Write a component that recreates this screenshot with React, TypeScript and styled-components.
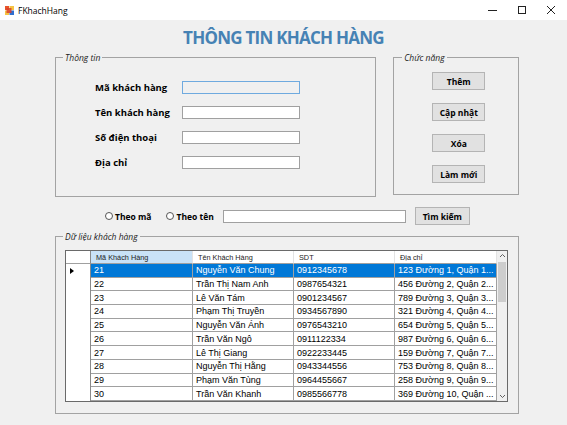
import React from "react";
import styled, { createGlobalStyle } from "styled-components";

const GlobalStyle = createGlobalStyle`
  html, body { margin: 0; padding: 0; }
  body {
    width: 567px;
    height: 425px;
    overflow: hidden;
    background: #f0f0f0;
    font-family: "Open Sans", "DejaVu Sans", sans-serif;
  }
  * { box-sizing: border-box; }
`;

const Window = styled.div`
  width: 567px;
  height: 425px;
  display: flex;
  flex-direction: column;
  background: #f0f0f0;
  overflow: hidden;
`;

const TitleBar = styled.div`
  height: 20px;
  flex-shrink: 0;
  background: #ffffff;
  display: flex;
  align-items: center;
`;

const AppIcon = styled.svg`
  margin-left: 5px;
  width: 9px;
  height: 9px;
  flex-shrink: 0;
`;

const WindowTitle = styled.span`
  margin-left: 4px;
  font-family: "Open Sans", sans-serif;
  font-size: 8.5px;
  color: #000;
`;

const Controls = styled.div`
  margin-left: auto;
  margin-right: 2px;
  display: flex;
  height: 100%;
`;

const ControlButton = styled.div`
  width: 29px;
  height: 100%;
  display: flex;
  align-items: center;
  justify-content: center;
`;

const Title = styled.h1`
  margin: 8px 0 0;
  text-align: center;
  font-family: "Open Sans", sans-serif;
  font-weight: 700;
  font-size: 17px;
  line-height: 20px;
  color: #4682b4;
  letter-spacing: -0.75px;
`;

const Content = styled.div`
  display: flex;
  flex-direction: column;
  padding: 0 48px 0 55px;
`;

const TopRow = styled.div`
  margin-top: 4px;
  display: flex;
  align-items: flex-start;
  gap: 17px;
`;

const Group = styled.fieldset<{ $w: number; $h: number }>`
  margin: 0;
  padding: 0;
  min-width: 0;
  width: ${(p) => p.$w}px;
  height: ${(p) => p.$h}px;
  border: 1px solid #a3a3a3;
`;

const Legend = styled.legend<{ $ml?: number }>`
  margin-left: ${(p) => p.$ml ?? 7}px;
  padding: 0 2px;
  font-family: "Open Sans", sans-serif;
  font-style: italic;
  font-size: 8.5px;
  line-height: 11px;
  color: #1a1a1a;
`;

const FormGrid = styled.div`
  display: grid;
  grid-template-columns: 87px 118px;
  row-gap: 12px;
  align-items: center;
  padding: 18px 0 0 39px;
`;

const FieldLabel = styled.label`
  font-family: "Open Sans", sans-serif;
  font-weight: 700;
  font-size: 9.5px;
  line-height: 13px;
  color: #000;
  white-space: nowrap;
`;

const TextBox = styled.div<{ $readOnly?: boolean; $w?: number }>`
  width: ${(p) => p.$w ?? 118}px;
  height: 13px;
  background: ${(p) => (p.$readOnly ? "#f0f0f0" : "#ffffff")};
  border: 1px solid ${(p) => (p.$readOnly ? "#6faadf" : "#a0a0a0")};
`;

const ButtonColumn = styled.div`
  display: flex;
  flex-direction: column;
  gap: 13px;
  padding: 9px 0 0 38px;
`;

const Button = styled.div<{ $w?: number }>`
  width: ${(p) => p.$w ?? 53}px;
  height: 18px;
  display: flex;
  align-items: center;
  justify-content: center;
  background: #e1e1e1;
  border: 1px solid #b4b4b4;
  font-family: "Open Sans", sans-serif;
  font-weight: 700;
  font-size: 8.5px;
  color: #000;
  white-space: nowrap;
`;

const SearchRow = styled.div`
  margin-top: 10px;
  height: 18px;
  display: flex;
  align-items: center;
  padding-left: 50px;
`;

const Radio = styled.label<{ $mr: number }>`
  display: flex;
  align-items: center;
  margin-right: ${(p) => p.$mr}px;
  font-family: "Open Sans", sans-serif;
  font-weight: 700;
  font-size: 8.5px;
  color: #000;
  white-space: nowrap;
`;

const RadioCircle = styled.span`
  width: 8px;
  height: 8px;
  border-radius: 50%;
  border: 1px solid #555;
  background: #fff;
  margin-right: 2px;
  flex-shrink: 0;
`;

const SearchButton = styled(Button)`
  margin-left: 9px;
`;

const DataGroup = styled(Group)`
  margin-top: 6px;
`;

const GridFrame = styled.div`
  margin: 8px 0 0 9px;
  width: 443px;
  height: 152px;
  border: 1px solid #6a6a6a;
  background: #ffffff;
  display: flex;
`;

const Table = styled.div`
  width: 431px;
  height: 150px;
  display: grid;
  grid-template-columns: 25px 102px 101px 101px 102px;
  grid-template-rows: 13px repeat(10, 1fr);
`;

const HeaderCell = styled.div<{ $active?: boolean }>`
  display: flex;
  align-items: center;
  padding-left: 5px;
  background: ${(p) => (p.$active ? "#c9e2f7" : "#ffffff")};
  border-right: 1px solid #e3e3e3;
  border-bottom: 1px solid #a0a0a0;
  font-family: "Liberation Sans", Arial, sans-serif;
  font-size: 7.3px;
  color: #222;
  white-space: nowrap;
  overflow: hidden;
`;

const CornerCell = styled(HeaderCell)`
  border-right: 1px solid #8a8a8a;
`;

const RowHeader = styled.div`
  display: flex;
  align-items: center;
  padding-left: 4px;
  background: #ffffff;
  border-right: 1px solid #8a8a8a;
`;

const Cell = styled.div<{ $selected?: boolean }>`
  display: flex;
  align-items: center;
  padding-left: 3px;
  background: ${(p) => (p.$selected ? "#0078d7" : "#ffffff")};
  color: ${(p) => (p.$selected ? "#ffffff" : "#000000")};
  border-right: 1px solid #a0a0a0;
  border-bottom: 1px solid #a0a0a0;
  font-family: "Liberation Sans", Arial, sans-serif;
  font-size: 9px;
  white-space: nowrap;
  overflow: hidden;
`;

const Scrollbar = styled.div`
  width: 10px;
  height: 150px;
  background: #f0f0f0;
  display: flex;
  flex-direction: column;
  align-items: center;
`;

const ScrollArrow = styled.svg`
  width: 7px;
  height: 10px;
  flex-shrink: 0;
`;

const Thumb = styled.div`
  margin-top: 1px;
  width: 8px;
  height: 40px;
  background: #cdcdcd;
`;

const ScrollSpacer = styled.div`
  flex: 1;
`;

type Customer = { id: string; name: string; phone: string; address: string };

const customers: Customer[] = [
  { id: "21", name: "Nguyễn Văn Chung", phone: "0912345678", address: "123 Đường 1, Quận 1..." },
  { id: "22", name: "Trần Thị Nam Anh", phone: "0987654321", address: "456 Đường 2, Quận 2..." },
  { id: "23", name: "Lê Văn Tám", phone: "0901234567", address: "789 Đường 3, Quận 3..." },
  { id: "24", name: "Phạm Thị Truyền", phone: "0934567890", address: "321 Đường 4, Quận 4..." },
  { id: "25", name: "Nguyễn Văn Ánh", phone: "0976543210", address: "654 Đường 5, Quận 5..." },
  { id: "26", name: "Trần Văn Ngô", phone: "0911122334", address: "987 Đường 6, Quận 6..." },
  { id: "27", name: "Lê Thị Giang", phone: "0922233445", address: "159 Đường 7, Quận 7..." },
  { id: "28", name: "Nguyễn Thị Hằng", phone: "0943344556", address: "753 Đường 8, Quận 8..." },
  { id: "29", name: "Phạm Văn Tùng", phone: "0964455667", address: "258 Đường 9, Quận 9..." },
  { id: "30", name: "Trần Văn Khanh", phone: "0985566778", address: "369 Đường 10, Quận ..." },
];

const fields = [
  { label: "Mã khách hàng", readOnly: true },
  { label: "Tên khách hàng" },
  { label: "Số điện thoại" },
  { label: "Địa chỉ" },
];

const actions = ["Thêm", "Cập nhật", "Xóa", "Làm mới"];

export default function App() {
  return (
    <>
      <GlobalStyle />
      <Window>
        <TitleBar>
          <AppIcon viewBox="0 0 9 9">
            <rect x="0" y="0" width="4" height="4" fill="#e8542b" />
            <rect x="4.5" y="0" width="4.5" height="4" fill="#f6c343" />
            <rect x="0" y="4.5" width="4" height="4.5" fill="#f6c343" />
            <rect x="4.5" y="4.5" width="4.5" height="4.5" fill="#2f6fd0" />
            <rect x="1.5" y="2" width="5" height="5" fill="#d8402a" opacity="0.85" />
          </AppIcon>
          <WindowTitle>FKhachHang</WindowTitle>
          <Controls>
            <ControlButton>
              <svg width="10" height="10" viewBox="0 0 10 10">
                <line x1="0" y1="5.5" x2="9" y2="5.5" stroke="#222" strokeWidth="1" />
              </svg>
            </ControlButton>
            <ControlButton>
              <svg width="10" height="10" viewBox="0 0 10 10">
                <rect x="1.5" y="1.5" width="7" height="7" fill="none" stroke="#222" strokeWidth="1" />
              </svg>
            </ControlButton>
            <ControlButton>
              <svg width="10" height="10" viewBox="0 0 10 10">
                <path d="M1 1 L9 9 M9 1 L1 9" stroke="#222" strokeWidth="1" />
              </svg>
            </ControlButton>
          </Controls>
        </TitleBar>

        <Title>THÔNG TIN KHÁCH HÀNG</Title>

        <Content>
          <TopRow>
            <Group $w={322} $h={145}>
              <Legend>Thông tin</Legend>
              <FormGrid>
                {fields.map((f) => (
                  <React.Fragment key={f.label}>
                    <FieldLabel>{f.label}</FieldLabel>
                    <TextBox $readOnly={f.readOnly} />
                  </React.Fragment>
                ))}
              </FormGrid>
            </Group>
            <Group $w={126} $h={143}>
              <Legend $ml={8}>Chức năng</Legend>
              <ButtonColumn>
                {actions.map((a) => (
                  <Button key={a}>{a}</Button>
                ))}
              </ButtonColumn>
            </Group>
          </TopRow>

          <SearchRow>
            <Radio $mr={15}>
              <RadioCircle />
              Theo mã
            </Radio>
            <Radio $mr={9}>
              <RadioCircle />
              Theo tên
            </Radio>
            <TextBox $w={183} />
            <SearchButton $w={55}>Tìm kiếm</SearchButton>
          </SearchRow>

          <DataGroup $w={464} $h={183}>
            <Legend>Dữ liệu khách hàng</Legend>
            <GridFrame>
              <Table>
                <CornerCell />
                <HeaderCell $active>Mã Khách Hàng</HeaderCell>
                <HeaderCell>Tên Khách Hàng</HeaderCell>
                <HeaderCell>SDT</HeaderCell>
                <HeaderCell>Địa chỉ</HeaderCell>
                {customers.map((c, i) => {
                  const sel = i === 0;
                  return (
                    <React.Fragment key={c.id}>
                      <RowHeader>
                        {sel && (
                          <svg width="4" height="6" viewBox="0 0 4 6">
                            <path d="M0 0 L4 3 L0 6 Z" fill="#000" />
                          </svg>
                        )}
                      </RowHeader>
                      <Cell $selected={sel}>{c.id}</Cell>
                      <Cell $selected={sel}>{c.name}</Cell>
                      <Cell $selected={sel}>{c.phone}</Cell>
                      <Cell $selected={sel}>{c.address}</Cell>
                    </React.Fragment>
                  );
                })}
              </Table>
              <Scrollbar>
                <ScrollArrow viewBox="0 0 7 10">
                  <path d="M1 6 L3.5 3.5 L6 6" fill="none" stroke="#606060" strokeWidth="1" />
                </ScrollArrow>
                <Thumb />
                <ScrollSpacer />
                <ScrollArrow viewBox="0 0 7 10">
                  <path d="M1 4 L3.5 6.5 L6 4" fill="none" stroke="#606060" strokeWidth="1" />
                </ScrollArrow>
              </Scrollbar>
            </GridFrame>
          </DataGroup>
        </Content>
      </Window>
    </>
  );
}
